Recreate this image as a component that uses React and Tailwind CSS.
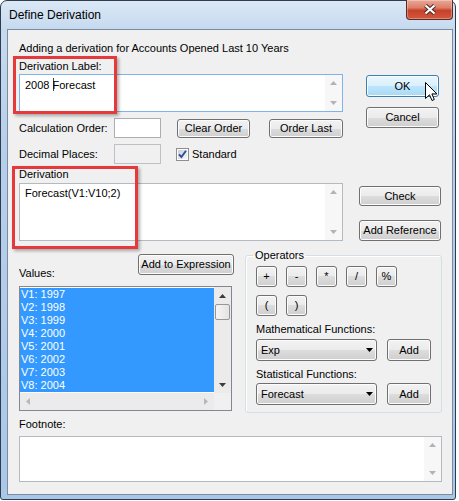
import React from "react";

const values = [
  "V1: 1997",
  "V2: 1998",
  "V3: 1999",
  "V4: 2000",
  "V5: 2001",
  "V6: 2002",
  "V7: 2003",
  "V8: 2004",
];

// Small scroll / drop-down arrow triangle
function Tri({ dir = "up", color = "#000" }) {
  const paths = {
    up: "M0 4L3.5 0L7 4Z",
    down: "M0 0L7 0L3.5 4Z",
    left: "M4 0L4 7L0 3.5Z",
    right: "M0 0L0 7L4 3.5Z",
  };
  const vertical = dir === "up" || dir === "down";
  const w = vertical ? 7 : 4;
  const h = vertical ? 4 : 7;
  return (
    <svg width={w} height={h} viewBox={`0 0 ${w} ${h}`} className="block">
      <path d={paths[dir]} fill={color} />
    </svg>
  );
}

function Btn({ className = "", def = false, children }) {
  const skin = def
    ? "border-[#3c7fb1] bg-[linear-gradient(180deg,#eaf6fd_0%,#d9f0fc_50%,#bee6fd_50%,#a7d9f5_100%)] shadow-[inset_0_0_0_1px_#fafdfe]"
    : "border-[#707070] bg-[linear-gradient(180deg,#f2f2f2_0%,#ebebeb_50%,#dddddd_50%,#cfcfcf_100%)] shadow-[inset_0_0_0_1px_#fcfcfc]";
  return (
    <button
      type="button"
      className={`flex shrink-0 items-center justify-center whitespace-nowrap rounded-[3px] border text-[11px] leading-[13px] text-black ${skin} ${className}`}
    >
      {children}
    </button>
  );
}

// Multi-line text box with an inactive vertical scrollbar
function Memo({ className = "", focused = false, children }) {
  return (
    <div
      className={`flex border bg-white ${
        focused ? "border-[#7eb4ea]" : "border-[#b5b9c0]"
      } ${className}`}
    >
      <div className="flex-1 whitespace-nowrap pl-[4px] pt-[3px]">{children}</div>
      <div className="flex w-[17px] flex-col items-center justify-between bg-[#f7f7f7] py-[6px]">
        <Tri dir="up" color="#b3b3b3" />
        <Tri dir="down" color="#b3b3b3" />
      </div>
    </div>
  );
}

function Combo({ children }) {
  return (
    <div className="flex h-[22px] w-[121px] items-center rounded-[3px] border border-[#707070] bg-[linear-gradient(180deg,#f2f2f2_0%,#ebebeb_50%,#dddddd_50%,#cfcfcf_100%)] pl-[4px] pr-[3px] shadow-[inset_0_0_0_1px_#fcfcfc]">
      <span className="flex-1">{children}</span>
      <Tri dir="down" color="#000" />
    </div>
  );
}

function CheckBox({ className = "" }) {
  return (
    <svg width="13" height="13" viewBox="0 0 13 13" className={`block shrink-0 ${className}`}>
      <defs>
        <linearGradient id="cbfill" x1="0" y1="0" x2="1" y2="1">
          <stop offset="0" stopColor="#cbcfd5" />
          <stop offset="1" stopColor="#f6f6f6" />
        </linearGradient>
      </defs>
      <rect x="0.5" y="0.5" width="12" height="12" fill="#fdfdfd" stroke="#8e8f8f" />
      <rect x="2" y="2" width="9" height="9" fill="url(#cbfill)" />
      <path d="M3 6.3L5.4 9L10 2.8" stroke="#2b4f9e" strokeWidth="1.9" fill="none" />
    </svg>
  );
}

function ListBox({ className = "" }) {
  return (
    <div className={`flex h-[125px] w-[213px] flex-col border border-[#828790] bg-white ${className}`}>
      <div className="flex h-[106px]">
        <div className="flex-1 pt-[1px]">
          {values.map((v) => (
            <div key={v} className="h-[13px] whitespace-nowrap bg-[#3399ff] pl-[1px] text-white">
              {v}
            </div>
          ))}
        </div>
        <div className="flex w-[17px] flex-col bg-[#ebebeb]">
          <div className="flex h-[17px] items-center justify-center">
            <Tri dir="up" color="#3c3c3c" />
          </div>
          <div className="mx-[1px] h-[16px] rounded-[2px] border border-[#979797] bg-[linear-gradient(90deg,#f5f5f5_0%,#e4e4e4_100%)]" />
          <div className="flex-1" />
          <div className="flex h-[17px] items-center justify-center">
            <Tri dir="down" color="#3c3c3c" />
          </div>
        </div>
      </div>
      <div className="flex h-[17px]">
        <div className="flex flex-1 items-center justify-between bg-[#ebebeb] px-[6px]">
          <Tri dir="left" color="#b8b8b8" />
          <Tri dir="right" color="#b8b8b8" />
        </div>
        <div className="w-[17px] bg-[#f0f0f0]" />
      </div>
    </div>
  );
}

function CloseButton() {
  return (
    <div className="-mt-px ml-auto mr-[2px] flex h-[20px] w-[47px] items-center justify-center rounded-b-[4px] border border-t-0 border-[#5a2a24] bg-[linear-gradient(180deg,#e9a896_0%,#dd806a_40%,#c7412b_55%,#d1583c_100%)] shadow-[inset_0_0_0_1px_rgba(255,255,255,0.3)]">
      <svg width="14" height="11" viewBox="0 0 14 11" className="block">
        <path d="M2.5 1.5L11.5 9.5M11.5 1.5L2.5 9.5" stroke="#4a2a26" strokeWidth="4.2" />
        <path d="M2.5 1.5L11.5 9.5M11.5 1.5L2.5 9.5" stroke="#ffffff" strokeWidth="2.2" />
      </svg>
    </div>
  );
}

export default function App() {
  return (
    <div className="relative h-[501px] w-[459px] bg-white font-['Liberation_Sans',Arial,sans-serif] text-[11px] leading-[13px] text-black">
      <div className="flex h-[500px] w-[456px] flex-col rounded-b-[3px] rounded-t-[7px] border border-[#2d3c4f] bg-[linear-gradient(180deg,#dbe8f6_0px,#c6daef_28px,#b8cfea_140px,#aac7e8_100%)]">
        {/* caption bar */}
        <div className="flex h-[28px] shrink-0">
          <div className="self-center pl-[8px] text-[12px] leading-[15px]">Define Derivation</div>
          <CloseButton />
        </div>

        {/* client area */}
        <div className="ml-[6px] flex h-[466px] w-[446px] flex-col border border-[#7b8ba0] bg-[#f0f0f0] pl-[11px] pt-[12px]">
          <div className="h-[13px] whitespace-nowrap">
            Adding a derivation for Accounts Opened Last 10 Years
          </div>

          <div className="mt-[5px] flex">
            <div className="flex w-[324px] flex-col">
              <div>Derivation Label:</div>
              <Memo focused className="mt-[1px] h-[38px]">
                <span className="pl-[1px]">2008 </span>
                <span className="mr-[-1px] inline-block h-[13px] w-px bg-[#444] align-[-2px]" />
                <span>Forecast</span>
              </Memo>

              <div className="mt-[6px] flex h-[20px] items-center">
                <div className="w-[95px]">Calculation Order:</div>
                <div className="h-[20px] w-[47px] border border-[#abadb3] bg-white" />
                <Btn className="ml-[16px] h-[19px] w-[73px]">Clear Order</Btn>
                <Btn className="ml-[19px] h-[19px] w-[74px]">Order Last</Btn>
              </div>

              <div className="mt-[6px] flex h-[20px] items-center">
                <div className="w-[95px]">Decimal Places:</div>
                <div className="h-[20px] w-[47px] border border-[#bdc0c4] bg-[#f0f0f0]" />
                <CheckBox className="ml-[15px]" />
                <span className="ml-[3px]">Standard</span>
              </div>

              <div className="mt-[4px]">Derivation</div>
              <Memo className="mt-[2px] h-[58px]">
                <span className="pl-[1px]">Forecast(V1:V10;2)</span>
              </Memo>
            </div>

            <div className="ml-[16px] flex flex-col">
              <Btn def className="ml-[7px] mt-[15px] h-[22px] w-[73px]">OK</Btn>
              <Btn className="ml-[7px] mt-[10px] h-[21px] w-[73px]">Cancel</Btn>
              <Btn className="mt-[58px] h-[20px] w-[82px]">Check</Btn>
              <Btn className="mt-[14px] h-[21px] w-[82px]">Add Reference</Btn>
            </div>
          </div>

          <div className="mt-[8px] flex">
            <div className="flex w-[215px] flex-col">
              <div className="flex h-[31px] justify-between">
                <div className="self-end">Values:</div>
                <Btn className="mt-[5px] h-[21px] w-[96px]">Add to Expression</Btn>
              </div>
              <ListBox className="mt-[6px]" />
            </div>

            <fieldset className="ml-[11px] h-[164px] w-[195px] rounded-[3px] border border-[#d5dfe5] px-[10px] shadow-[inset_1px_1px_0_#ffffff]">
              <legend className="-ml-[3px] px-[2px]">Operators</legend>
              <div className="mt-[4px] flex gap-[9px]">
                <Btn className="h-[21px] w-[21px]">+</Btn>
                <Btn className="h-[21px] w-[21px]">-</Btn>
                <Btn className="h-[21px] w-[21px]">*</Btn>
                <Btn className="h-[21px] w-[21px]">/</Btn>
                <Btn className="h-[21px] w-[21px]">%</Btn>
              </div>
              <div className="mt-[8px] flex gap-[9px]">
                <Btn className="h-[21px] w-[21px]">(</Btn>
                <Btn className="h-[21px] w-[21px]">)</Btn>
              </div>
              <div className="mt-[7px]">Mathematical Functions:</div>
              <div className="mt-[3px] flex items-center">
                <Combo>Exp</Combo>
                <Btn className="ml-[10px] h-[22px] w-[44px]">Add</Btn>
              </div>
              <div className="mt-[7px]">Statistical Functions:</div>
              <div className="mt-[2px] flex items-center">
                <Combo>Forecast</Combo>
                <Btn className="ml-[10px] h-[22px] w-[44px]">Add</Btn>
              </div>
            </fieldset>
          </div>

          <div className="mt-[5px]">Footnote:</div>
          <Memo className="mt-[5px] h-[46px] w-[423px]" />
        </div>
      </div>

      {/* highlight frames */}
      <div className="absolute left-[13px] top-[56px] h-[58px] w-[104px] border-[3px] border-[#e6393c] shadow-[2px_2px_3px_rgba(0,0,0,0.3)]" />
      <div className="absolute left-[12px] top-[166px] h-[83px] w-[126px] border-[3px] border-[#e6393c] shadow-[2px_2px_3px_rgba(0,0,0,0.3)]" />

      {/* mouse pointer over OK */}
      <svg className="absolute left-[425px] top-[82px]" width="13" height="20" viewBox="0 0 13 20">
        <path
          d="M0.5 0.5L0.5 16.5L4.5 12.8L7 18.5L9.3 17.5L6.9 11.9L11.9 11.9Z"
          fill="#ffffff"
          stroke="#000000"
          strokeWidth="1"
          strokeLinejoin="round"
        />
      </svg>
    </div>
  );
}
